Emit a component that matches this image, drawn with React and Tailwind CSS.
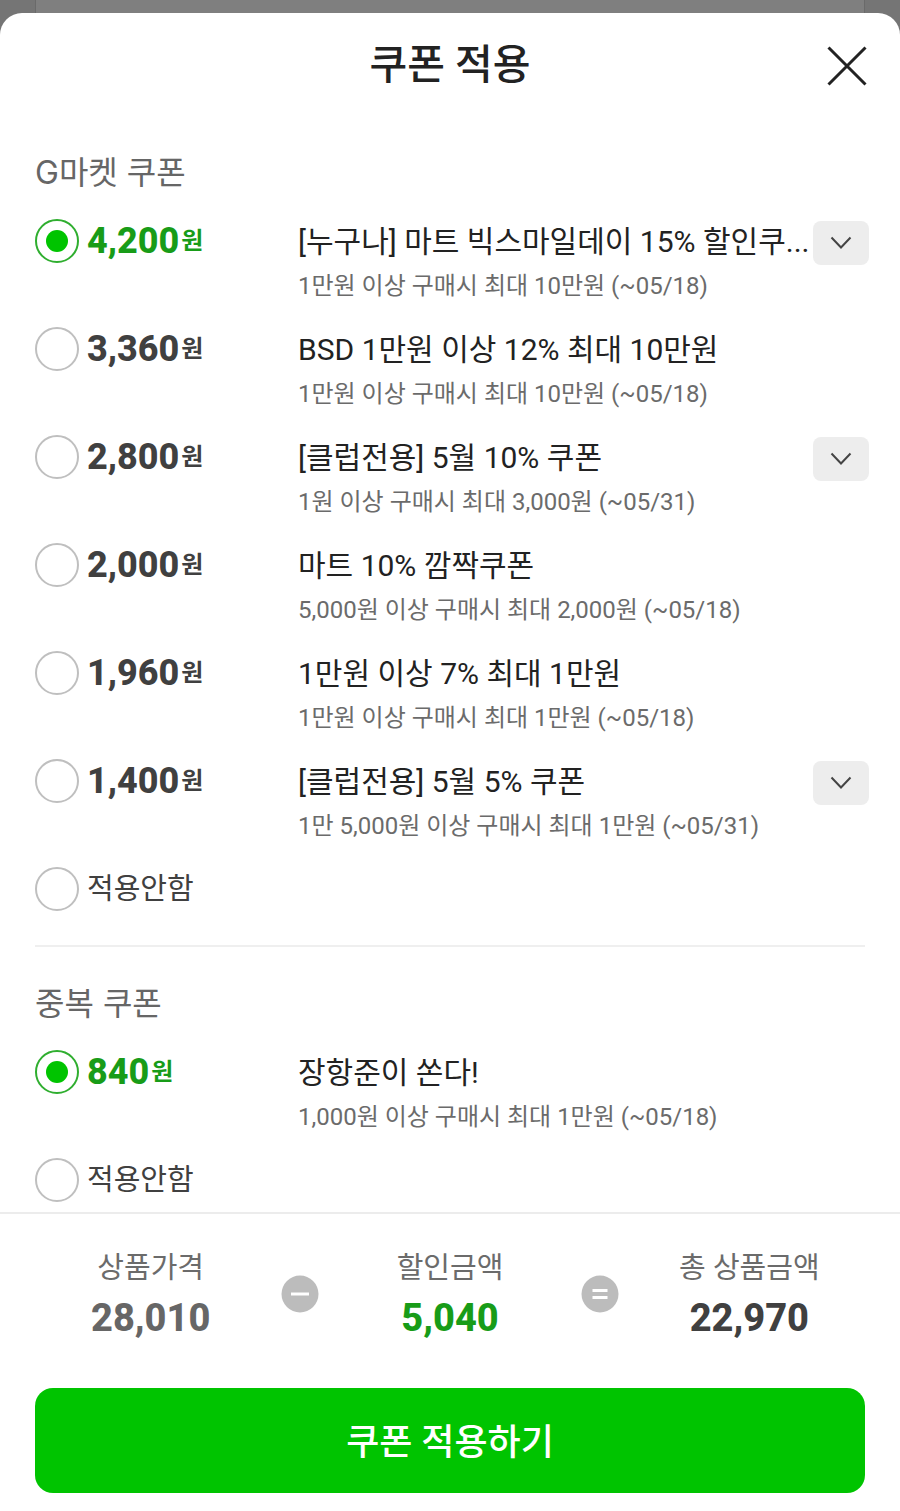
import { useState } from "react";

const MARKET_COUPONS = [
  { id: "m1", price: "4,200", title: "[누구나] 마트 빅스마일데이 15% 할인쿠...", note: "1만원 이상 구매시 최대 10만원 (~05/18)", more: true },
  { id: "m2", price: "3,360", title: "BSD 1만원 이상 12% 최대 10만원", note: "1만원 이상 구매시 최대 10만원 (~05/18)" },
  { id: "m3", price: "2,800", title: "[클럽전용] 5월 10% 쿠폰", note: "1원 이상 구매시 최대 3,000원 (~05/31)", more: true },
  { id: "m4", price: "2,000", title: "마트 10% 깜짝쿠폰", note: "5,000원 이상 구매시 최대 2,000원 (~05/18)" },
  { id: "m5", price: "1,960", title: "1만원 이상 7% 최대 1만원", note: "1만원 이상 구매시 최대 1만원 (~05/18)" },
  { id: "m6", price: "1,400", title: "[클럽전용] 5월 5% 쿠폰", note: "1만 5,000원 이상 구매시 최대 1만원 (~05/31)", more: true },
];

const EXTRA_COUPONS = [
  { id: "e1", price: "840", title: "장항준이 쏜다!", note: "1,000원 이상 구매시 최대 1만원 (~05/18)" },
];

function Radio({ id, name, checked, onChange }) {
  return (
    <input
      type="radio"
      id={id}
      name={name}
      checked={checked}
      onChange={onChange}
      className="grid size-11 shrink-0 appearance-none place-content-center rounded-full border-2 border-[#bfbfbf] bg-white before:size-[22px] before:rounded-full before:bg-transparent checked:border-[#2fae2f] checked:before:bg-[#00c400]"
    />
  );
}

function CouponGroup({ heading, name, coupons }) {
  const [selected, setSelected] = useState(coupons[0].id);
  const noneId = name + "-none";
  return (
    <fieldset className="min-w-0">
      <legend className="font-['Inter','Noto_Sans_CJK_KR',sans-serif] text-[32px] leading-12 text-[#666]">{heading}</legend>
      <div className="mt-[22px] flex flex-col gap-5">
        {coupons.map((c) => (
          <div key={c.id} className="flex h-[88px] items-start">
            <div className="flex h-11 w-[263px] shrink-0 items-center gap-2">
              <Radio id={c.id} name={name} checked={selected === c.id} onChange={() => setSelected(c.id)} />
              <label
                htmlFor={c.id}
                className={
                  "flex items-center gap-0.5 leading-11 " +
                  (selected === c.id ? "text-[#189c18]" : "text-[#404040]")
                }
              >
                <span className="text-4xl leading-11 font-extrabold">{c.price}</span>
                <span className="text-2xl leading-11 font-bold">원</span>
              </label>
            </div>
            <div className="min-w-0 flex-1 pt-px">
              <p className="truncate text-3xl leading-11 text-[#222]">{c.title}</p>
              <p className="truncate text-2xl leading-11 text-[#6b6b6b]">{c.note}</p>
            </div>
            {c.more && (
              <button type="button" aria-label="쿠폰 상세 보기" className="-mr-1 mt-0.5 flex h-11 w-14 shrink-0 items-center justify-center rounded-lg bg-[#ededed]">
                <svg width="22" height="14" viewBox="0 0 22 14" fill="none" stroke="#444" strokeWidth="2">
                  <path d="M1.5 1.5 11 11.5 20.5 1.5" />
                </svg>
              </button>
            )}
          </div>
        ))}
        <div className="flex items-center gap-2">
          <Radio id={noneId} name={name} checked={selected === noneId} onChange={() => setSelected(noneId)} />
          <label htmlFor={noneId} className="text-[29px] leading-11 text-[#404040]">적용안함</label>
        </div>
      </div>
    </fieldset>
  );
}

function Amount({ label, value, tone }) {
  return (
    <div className="flex flex-1 flex-col items-center">
      <dt className="text-[29px] leading-11 text-[#6b6b6b]">{label}</dt>
      <dd className={"mt-1.5 text-[38px] leading-11 font-extrabold " + tone}>{value}</dd>
    </div>
  );
}

function Operator({ d }) {
  return (
    <svg className="-mx-5 mt-[29px] shrink-0" width="38" height="38" viewBox="0 0 38 38" aria-hidden="true">
      <circle cx="19" cy="19" r="18.5" fill="#bcbcbc" />
      <path d={d} stroke="#fff" strokeWidth="3" />
    </svg>
  );
}

export default function App() {
  return (
    <div className="relative flex min-h-screen flex-col bg-[#757575] pt-[13px] font-['Roboto','Noto_Sans_CJK_KR',sans-serif]">
      <div className="absolute inset-x-[35px] top-0 h-[13px] border-x border-[#6a6a6a] bg-[#7f7f7f]" />
      <main className="relative flex flex-1 flex-col rounded-t-[22px] bg-white">
        <header className="grid h-[106px] grid-cols-[1fr_auto_1fr] items-center px-[33px]">
          <h1 className="col-start-2 text-[41px] font-medium text-[#222]">쿠폰 적용</h1>
          <button type="button" aria-label="닫기" className="justify-self-end">
            <svg width="40" height="40" viewBox="0 0 40 40" fill="none" stroke="#222" strokeWidth="3">
              <path d="M1.5 1.5 38.5 38.5M38.5 1.5 1.5 38.5" />
            </svg>
          </button>
        </header>
        <div className="flex-1 px-[35px] pt-[30px] pb-[10px]">
          <CouponGroup heading="G마켓 쿠폰" name="market" coupons={MARKET_COUPONS} />
          <hr className="mt-[34px] mb-[33px] border-t-2 border-[#efefef]" />
          <CouponGroup heading="중복 쿠폰" name="extra" coupons={EXTRA_COUPONS} />
        </div>
        <footer className="border-t-2 border-[#ececec] px-[35px] pt-8 pb-[18px]">
          <dl className="-mx-[35px] flex items-start">
            <Amount label="상품가격" value="28,010" tone="text-[#666]" />
            <Operator d="M10 19h18" />
            <Amount label="할인금액" value="5,040" tone="text-[#189c18]" />
            <Operator d="M11.500 15.500h15M11.500 22.500h15" />
            <Amount label="총 상품금액" value="22,970" tone="text-[#404040]" />
          </dl>
          <button type="button" className="mt-12 h-[105px] w-full rounded-[18px] bg-[#00c400] pt-1 text-4xl font-medium text-white">
            쿠폰 적용하기
          </button>
        </footer>
      </main>
    </div>
  );
}
